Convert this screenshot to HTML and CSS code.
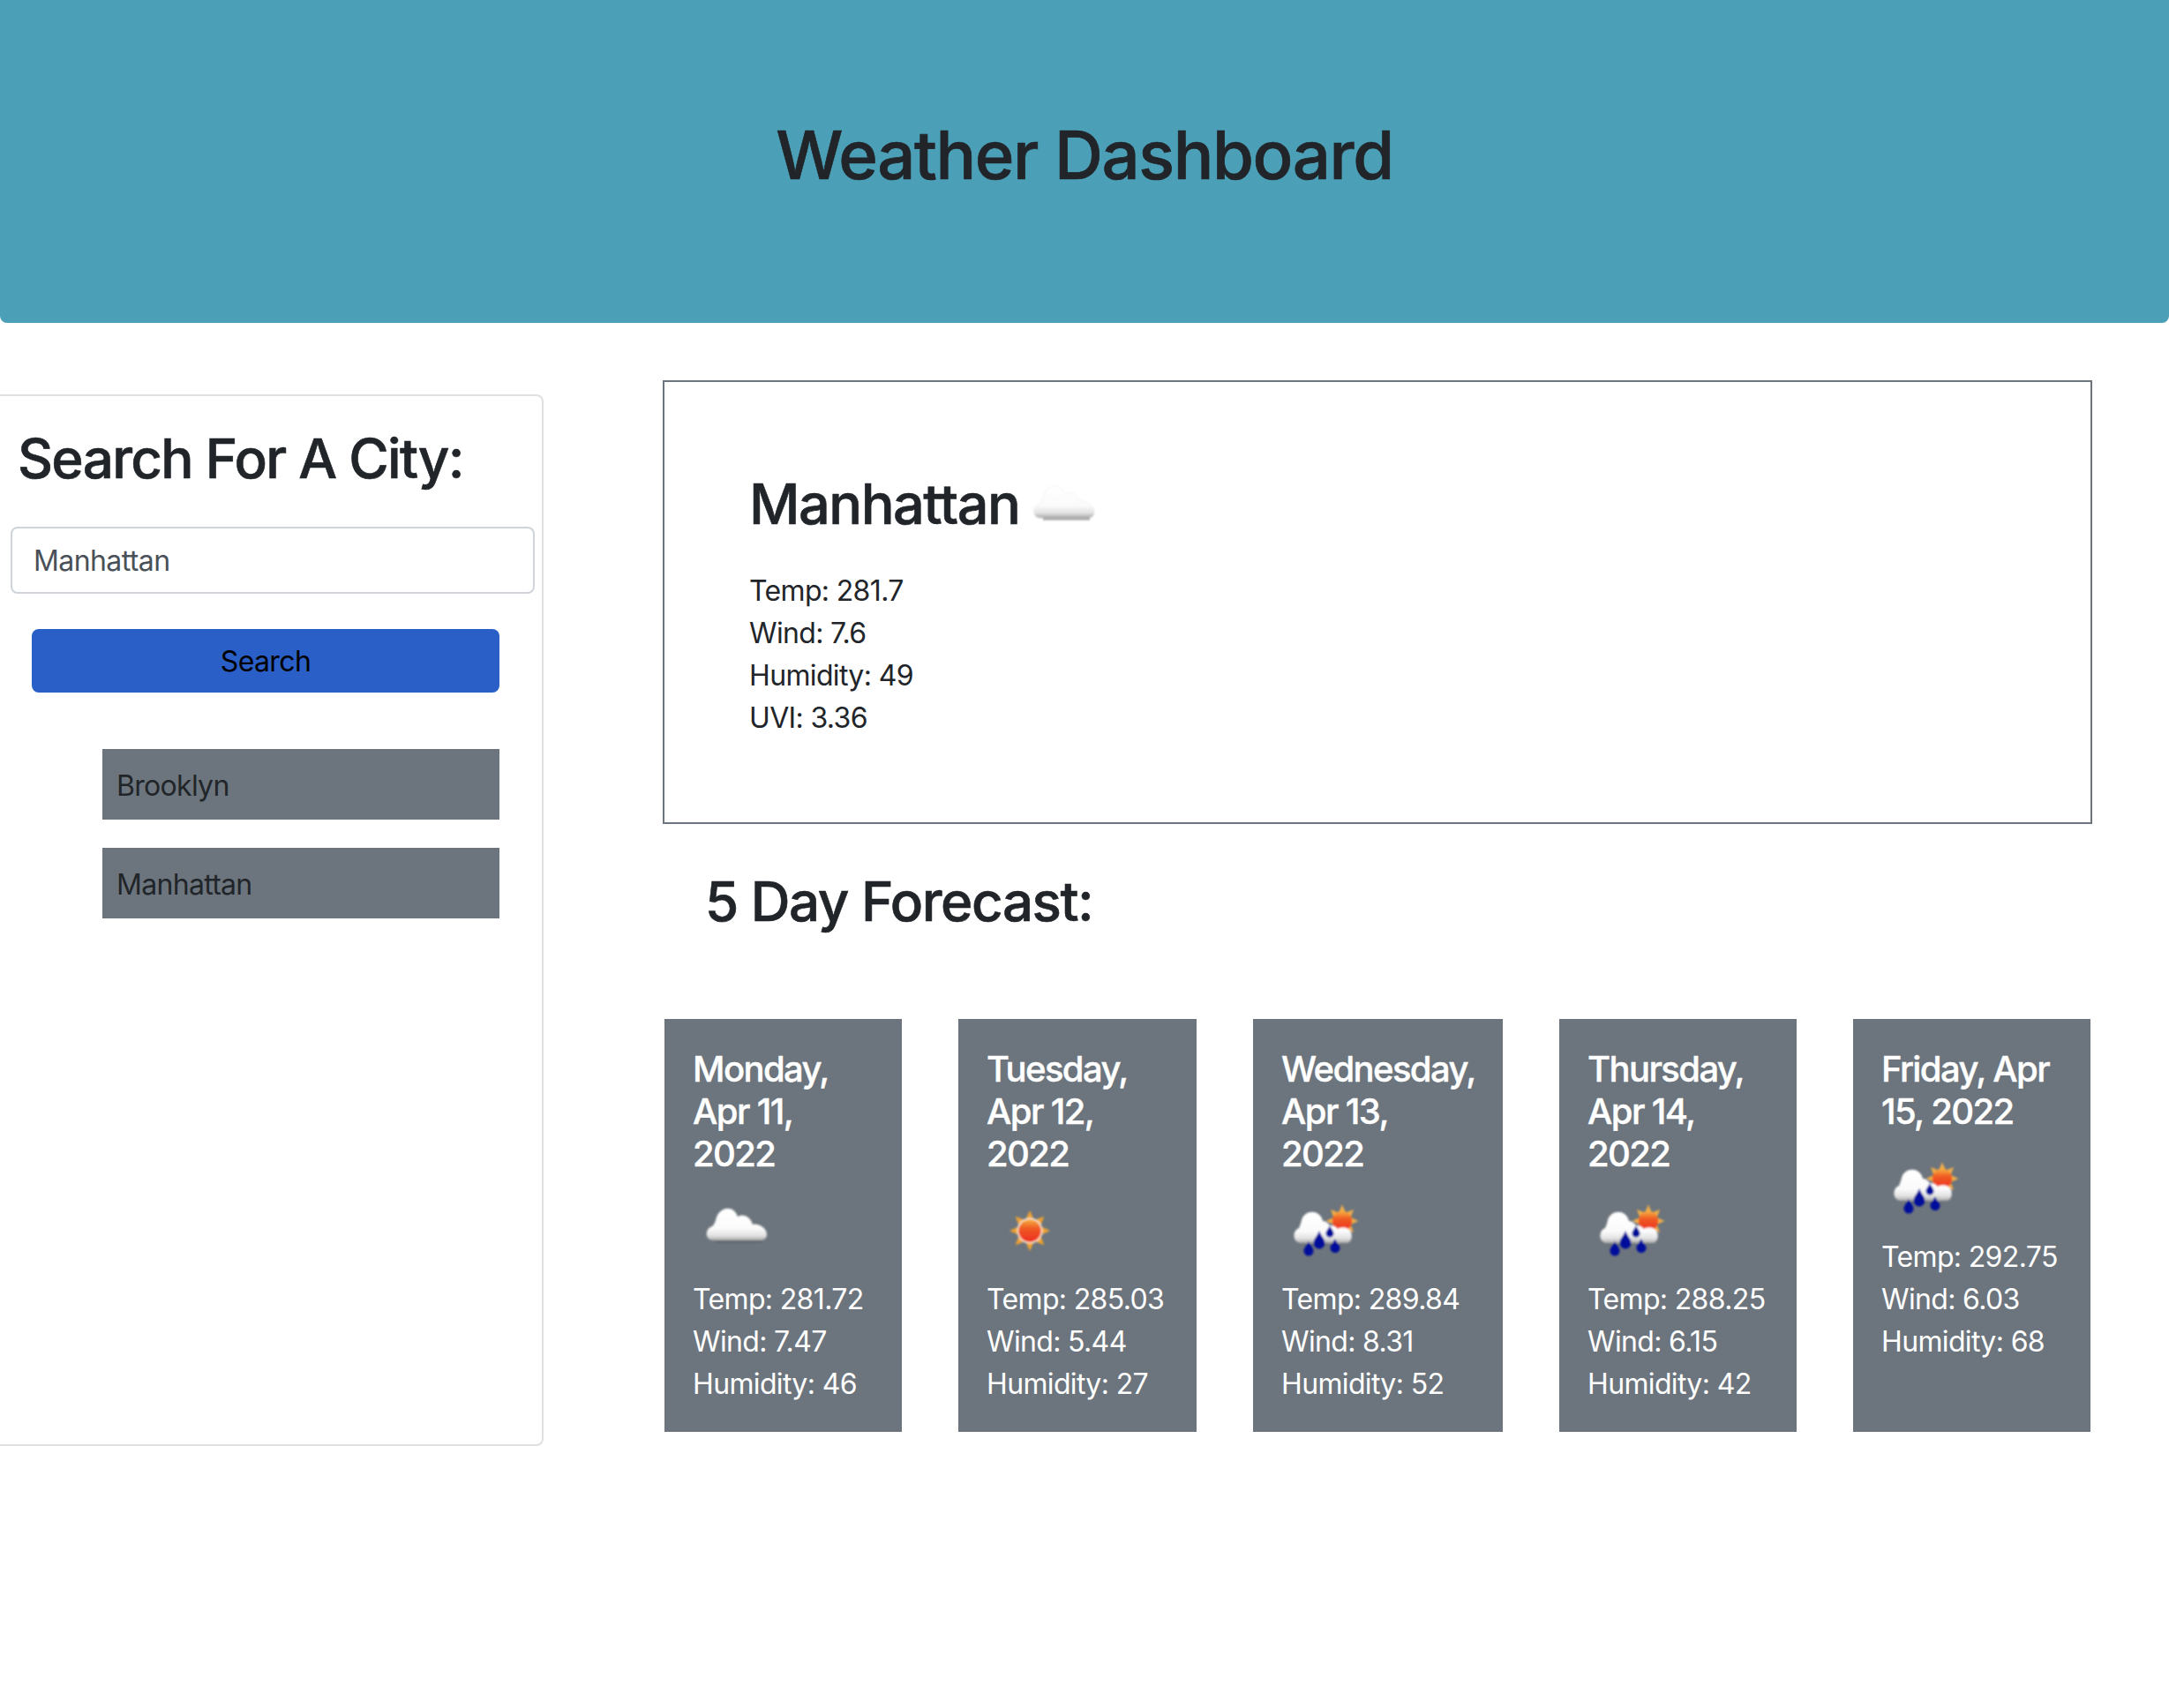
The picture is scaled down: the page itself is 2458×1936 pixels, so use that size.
FILE: index.html
```html
<!DOCTYPE html>
<html lang="en">
<head>
<meta charset="utf-8">
<title>Weather Dashboard</title>
<link rel="stylesheet" href="styles.css">
</head>
<body>
<svg class="defs" width="0" height="0" aria-hidden="true">
  <defs>
    <filter id="soft" x="-10%" y="-10%" width="120%" height="120%"><feGaussianBlur stdDeviation="0.8"/></filter>
    <linearGradient id="cloudFill" x1="0" y1="0" x2="0" y2="1">
      <stop offset="0" stop-color="#ffffff"/>
      <stop offset="0.62" stop-color="#fbfbfb"/>
      <stop offset="0.85" stop-color="#e2e2e2"/>
      <stop offset="1" stop-color="#a9a9a9"/>
    </linearGradient>
    <linearGradient id="sunFill" x1="0" y1="0" x2="0" y2="1">
      <stop offset="0" stop-color="#f6b040"/>
      <stop offset="0.4" stop-color="#f05a24"/>
      <stop offset="1" stop-color="#ec2f1e"/>
    </linearGradient>
    <symbol id="icon-cloud" viewBox="0 0 100 100">
      <g filter="url(#soft)">
        <rect x="26" y="58" width="53" height="3.5" fill="#55585c" opacity="0.55"/>
        <path d="M23 59 C14 59 13 46 22 43 C24 41 25 39 26 36 C29 20 47 18 51 32 C58 28 66 33 68 41 C74 39 84 45 84 52 C84 57 81 59 77 59 Z" fill="url(#cloudFill)" stroke="#000" stroke-opacity="0.07" stroke-width="0.8"/>
      </g>
    </symbol>
    <symbol id="icon-sun" viewBox="0 0 100 100">
      <g filter="url(#soft)" transform="translate(49 48)">
        <polygon points="23,0 12,5 16.3,16.3 5,12 0,23 -5,12 -16.3,16.3 -12,5 -23,0 -12,-5 -16.3,-16.3 -5,-12 0,-23 5,-12 16.3,-16.3 12,-5" fill="#f0a232"/>
        <circle r="14.5" fill="#f9e4cf"/>
        <circle r="12.8" fill="url(#sunFill)"/>
      </g>
    </symbol>
    <symbol id="icon-rain" viewBox="0 0 100 100">
      <g filter="url(#soft)">
        <g transform="translate(69 37) scale(0.8)">
          <polygon points="23,0 12,5 16.3,16.3 5,12 0,23 -5,12 -16.3,16.3 -12,5 -23,0 -12,-5 -16.3,-16.3 -5,-12 0,-23 5,-12 16.3,-16.3 12,-5" fill="#f2ad48"/>
          <circle r="14" fill="url(#sunFill)"/>
        </g>
        <path d="M21 62 C13 61 12 48 20 45 C21 43 22 40 23 36 C26 24 44 23 47 37 C50 37 53 39 55 42 C60 42 62 44 64 46 C66 44 74 43 77 47 C81 50 81 60 75 62 Z" fill="url(#cloudFill)"/>
        <path d="M31 60 C33 65 36.500 67 36.500 71 A5.500 5.500 0 0 1 25.500 71 C25.500 67 29 65 31 60 Z" fill="#02109a"/>
        <path d="M43 48 C45 54 49.500 57 49.500 62 A6.500 6.500 0 0 1 36.500 62 C36.500 57 41 54 43 48 Z" fill="#02109a"/>
        <path d="M61 57 C62 61 66.500 64 66.500 67.500 A5.500 5.500 0 0 1 55.500 67.500 C55.500 64 59 61 61 57 Z" fill="#02109a"/>
        <path d="M55 42 C56 45 59.500 48 59.500 51 A4.500 4.500 0 0 1 50.500 51 C50.500 48 54 45 55 42 Z" fill="#02109a"/>
      </g>
    </symbol>
  </defs>
</svg>

<header class="banner">
  <h1 class="banner-title">Weather Dashboard</h1>
</header>

<div class="layout">
  <aside class="sidebar">
    <h2 class="heading sidebar-heading">Search For A City:</h2>
    <input class="city-input" type="text" value="Manhattan" aria-label="City">
    <button class="search-btn" type="button">Search</button>
    <ul class="history">
      <li class="history-item">Brooklyn</li>
      <li class="history-item">Manhattan</li>
    </ul>
  </aside>

  <main class="content">
    <section class="current">
      <div class="current-head">
        <h2 class="heading current-city">Manhattan</h2>
        <svg class="icon"><use href="#icon-cloud"/></svg>
      </div>
      <p class="line">Temp: 281.7</p>
      <p class="line">Wind: 7.6</p>
      <p class="line">Humidity: 49</p>
      <p class="line">UVI: 3.36</p>
    </section>

    <h2 class="heading forecast-heading">5 Day Forecast:</h2>

    <section class="forecast">
      <article class="day">
        <h3 class="day-date">Monday, Apr 11, 2022</h3>
        <svg class="icon"><use href="#icon-cloud"/></svg>
        <p class="line">Temp: 281.72</p>
        <p class="line">Wind: 7.47</p>
        <p class="line">Humidity: 46</p>
      </article>
      <article class="day">
        <h3 class="day-date">Tuesday, Apr 12, 2022</h3>
        <svg class="icon"><use href="#icon-sun"/></svg>
        <p class="line">Temp: 285.03</p>
        <p class="line">Wind: 5.44</p>
        <p class="line">Humidity: 27</p>
      </article>
      <article class="day">
        <h3 class="day-date">Wednesday, Apr 13, 2022</h3>
        <svg class="icon"><use href="#icon-rain"/></svg>
        <p class="line">Temp: 289.84</p>
        <p class="line">Wind: 8.31</p>
        <p class="line">Humidity: 52</p>
      </article>
      <article class="day">
        <h3 class="day-date">Thursday, Apr 14, 2022</h3>
        <svg class="icon"><use href="#icon-rain"/></svg>
        <p class="line">Temp: 288.25</p>
        <p class="line">Wind: 6.15</p>
        <p class="line">Humidity: 42</p>
      </article>
      <article class="day">
        <h3 class="day-date">Friday, Apr 15, 2022</h3>
        <svg class="icon"><use href="#icon-rain"/></svg>
        <p class="line">Temp: 292.75</p>
        <p class="line">Wind: 6.03</p>
        <p class="line">Humidity: 68</p>
      </article>
    </section>
  </main>
</div>
</body>
</html>
```

FILE: styles.css
```css
* { box-sizing: border-box; }

html, body { margin: 0; padding: 0; }

body {
  font-family: Inter, "Liberation Sans", sans-serif;
  font-size: 32px;
  line-height: 48px;
  color: #212529;
  background: #fff;
  min-height: 1936px;
  overflow-x: hidden;
}

.defs { position: absolute; }

.banner {
  height: 366px;
  background: #4ba0b7;
  border-radius: 0 0 8px 8px;
  padding-top: 127px;
  text-align: center;
}

.banner-title {
  margin: 0;
  font-size: 76px;
  line-height: 96px;
  font-weight: 500;
  letter-spacing: -1.4px;
  -webkit-text-stroke: 0.7px currentColor;
}

.layout {
  display: flex;
  align-items: flex-start;
}

.sidebar {
  width: 628px;
  min-height: 1192px;
  margin: 81px 0 0 -12px;
  border: 2px solid #dfe0e1;
  border-radius: 8px;
  background: #fff;
}

.heading {
  margin: 0;
  font-size: 62px;
  line-height: 77px;
  font-weight: 500;
  letter-spacing: -1.7px;
  -webkit-text-stroke: 0.6px currentColor;
}

.sidebar-heading {
  margin: 32px 0 39px 30px;
}

.city-input {
  display: block;
  width: 594px;
  height: 76px;
  margin-left: 22px;
  padding: 0 24px;
  border: 2px solid #ced4da;
  border-radius: 8px;
  background: #fff;
  color: #495057;
  font: inherit;
  letter-spacing: -0.6px;
}

.search-btn {
  display: block;
  width: 530px;
  height: 72px;
  margin: 40px 0 0 46px;
  padding: 2px 0 0;
  border: 0;
  border-radius: 8px;
  background: #2a5fc7;
  color: #000;
  font: inherit;
  letter-spacing: -0.6px;
}

.history {
  list-style: none;
  margin: 64px 0 0 126px;
  padding: 0;
  display: flex;
  flex-direction: column;
  gap: 32px;
}

.history-item {
  width: 450px;
  height: 80px;
  padding: 18px 16px 14px;
  background: #6c757d;
  color: #212529;
  letter-spacing: -0.7px;
}

.content {
  width: 1620px;
  margin: 65px 0 0 135px;
}

.current {
  height: 503px;
  padding: 95px 96px;
  border: 2px solid #6c757d;
}

.current-head {
  display: flex;
  align-items: flex-start;
  height: 100px;
  margin-bottom: 16px;
}

.current-city {
  margin-top: 5px;
  margin-right: 1px;
  font-size: 63px;
  letter-spacing: -1.5px;
}

.icon {
  display: block;
  width: 100px;
  height: 100px;
  flex: none;
}

.line {
  margin: 0 0 -2px;
  padding-top: 2px;
  letter-spacing: -0.65px;
}

.forecast-heading {
  margin: 49px 0 95px;
  padding-left: 48px;
  letter-spacing: -1.5px;
}

.forecast {
  display: grid;
  grid-template-columns: 269px 270px 283px 269px 269px;
  column-gap: 64px;
  margin-left: 2px;
}

.day {
  height: 468px;
  padding: 32px;
  background: #6c757d;
  color: #fff;
}

.day-date {
  margin: 0 0 16px;
  padding-top: 1px;
  font-size: 40px;
  line-height: 48px;
  font-weight: 500;
  letter-spacing: -1.6px;
  -webkit-text-stroke: 0.4px currentColor;
}

.day-date + .icon {
  margin-top: -1px;
}
```
